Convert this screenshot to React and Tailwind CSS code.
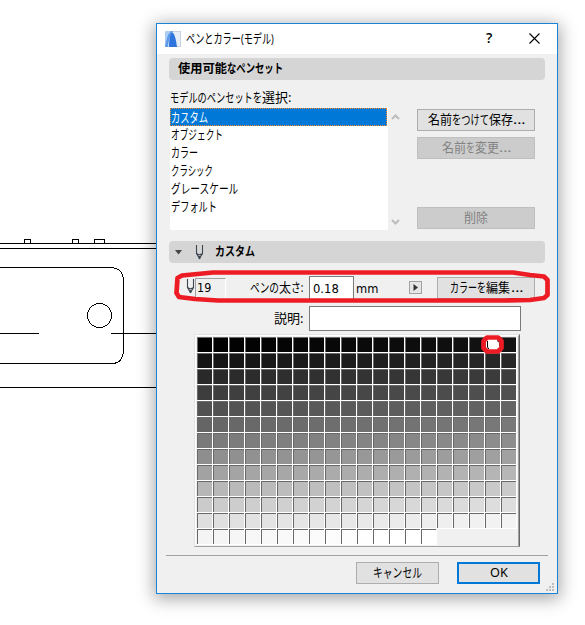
import { useLayoutEffect, useRef, useState } from "react";

const PEN_COUNT = 255;
const SELECTED_PEN = 19;

const penSets = [
  { name: "カスタム", width: 37, selected: true },
  { name: "オブジェクト", width: 52 },
  { name: "カラー", width: 27 },
  { name: "クラシック", width: 42 },
  { name: "グレースケール", width: 67 },
  { name: "デフォルト", width: 46 },
];

function Fit({ width, children }) {
  const ref = useRef(null);
  const [scale, setScale] = useState(1);

  useLayoutEffect(() => {
    setScale(width / ref.current.offsetWidth);
  }, [width, children]);

  return (
    <span className="inline-block whitespace-nowrap" style={{ width }}>
      <span ref={ref} className="inline-block origin-left" style={{ transform: `scaleX(${scale})` }}>
        {children}
      </span>
    </span>
  );
}

function Runs({ runs }) {
  return (
    <span className="inline-flex">
      {runs.map(([text, width]) => (
        <Fit key={text} width={width}>{text}</Fit>
      ))}
    </span>
  );
}

function Button({ className = "", disabled, primary, children }) {
  const look = disabled
    ? "border border-[#bfbfbf] bg-[#cccccc] text-[#838383]"
    : primary
      ? "border-2 border-[#0078d7] bg-[#e1e1e1]"
      : "border border-[#adadad] bg-[#e1e1e1]";
  return (
    <button type="button" disabled={disabled} className={`flex h-[22px] items-center justify-center ${look} ${className}`}>
      {children}
    </button>
  );
}

function PenIcon({ className = "" }) {
  return (
    <svg width="9" height="15" viewBox="0 0 9 15" fill="none" stroke="#3c4650" className={className}>
      <path d="M1.5 0V8.5L4.5 13.5L7.5 8.5V0M1.5 8.5Q4.5 11 7.5 8.5" strokeWidth="1.1" />
      <path d="M4.5 11V14" strokeWidth="1.6" />
    </svg>
  );
}

function Drawing() {
  return (
    <svg width="157" height="625" fill="none" stroke="#000" shapeRendering="crispEdges" className="absolute top-0 left-0">
      <path d="M0 243.5H157M0 248.5H157M0 387.5H157M0 333.5H39M111 333.5H157" />
      <path d="M24.5 243V239.5H30.5V243M72.5 243V239.5H78.5V243M94.5 243V239.5H104.5V243" />
      <path d="M0 267.5H111Q123.500 268.500 123.500 281V351Q122.500 363.500 112 363.500H0" />
      <circle cx="99.5" cy="315.500" r="12" />
    </svg>
  );
}

function TitleBar() {
  return (
    <div className="flex h-[30px] items-center bg-white pl-2">
      <svg width="16" height="16" viewBox="0 0 16 16" className="-mt-px">
        <rect x=".5" y=".5" width="15" height="15" fill="#e6edf7" stroke="#c9d2df" />
        <path d="M0 2V13C1 8 3 2 5 0H2Z" fill="#a9cdf8" />
        <path d="M0 16C1 8 3 2 6 0H8C5 3 4 9 3 16Z" fill="#5d9bea" />
        <path d="M4 16C4 8 5 3 7 1C10 3 11 9 12 16Z" fill="#2f74dc" />
      </svg>
      <span className="ml-[5px] pb-0.5 text-[13px]"><Fit width={88}>ペンとカラー(モデル)</Fit></span>
      <span className="ml-auto w-[9px] pb-0.5 font-['Open_Sans'] text-sm font-semibold">?</span>
      <svg width="11" height="11" viewBox="0 0 11 11" stroke="#000" strokeWidth="1.1" className="-mt-0.5 mr-[17px] ml-[34px]">
        <path d="M.5 .5L10.500 10.500M10.500 .5L.5 10.500" />
      </svg>
    </div>
  );
}

function PenGrid() {
  return (
    <div className="ml-[37px] mt-[3px] h-[213px] w-[326px] border border-t-[#e3e3e3] border-l-[#e3e3e3] border-r-[#696969] border-b-[#a0a0a0]">
      <div className="h-full border-t border-r border-l border-t-white border-l-white border-r-[#a0a0a0] pt-px pl-px">
        <div className="grid w-[320px] grid-cols-[repeat(20,16px)]">
          {Array.from({ length: PEN_COUNT }, (_, i) => {
            const level = Math.min(255, Math.round(i * 1.015));
            const tone = i === SELECTED_PEN - 1 ? 255 : level;
            return (
              <div key={i} className="size-4 border-r border-b border-white">
                <div
                  className="size-[15px] border-t border-l border-[#696969]"
                  style={{ backgroundColor: `rgb(${tone}, ${tone}, ${tone})` }}
                />
              </div>
            );
          })}
        </div>
      </div>
    </div>
  );
}

function Marks() {
  return (
    <svg width="585" height="625" fill="none" strokeLinejoin="round" className="pointer-events-none absolute top-0 left-0">
      <path d="M487.500 341V347L489 349.500M497 340.500L499.500 342.500V346" stroke="#000" />
      <g stroke="#ed1c24" strokeWidth="4.7">
        <path d="M213 272.500H513L530 275L544 276.500L547.500 280V295L544 298L530 300L505 300.500H218L195 299L179 297L176.500 293L177.500 278L182 275.500Z" />
        <path d="M487 337.500H498L501.500 341V348L498 351.500H487L483.500 348V341Z" />
      </g>
    </svg>
  );
}

export default function App() {
  return (
    <div className="relative h-[625px] w-[585px] overflow-hidden bg-white pt-[23px] pl-[156px] font-['Noto_Sans','Noto_Sans_CJK_JP',sans-serif] text-xs leading-[18px] text-black">
      <Drawing />
      <div className="relative h-[571px] w-[402px] border border-[#1883d7] bg-[#f0f0f0] shadow-[0_3px_16px_2px_rgba(0,0,0,0.35)]">
        <TitleBar />

        <div className="mt-1 ml-3 flex h-[22px] w-[376px] items-center rounded bg-[#d5d5d5] pl-[9px] text-[12.5px] font-bold">
          <Runs runs={[["使用可能", 49], ["なペンセット", 56]]} />
        </div>
        <div className="mt-2 ml-[13px] flex h-[20px] items-center pb-0.5 text-[13px]">
          <Runs runs={[["モデルのペンセットを", 92], ["選択:", 29]]} />
        </div>

        <div className="ml-[13px] flex h-[122px]">
          <ul className="w-[218px] bg-white text-[13px]">
            {penSets.map((set) => (
              <li
                key={set.name}
                className={set.selected ? "flex h-[18px] w-[217px] items-center border border-dotted border-[#ff8728] bg-[#0078d7] pb-px text-white" : "flex h-[18px] items-center pb-0.5 pl-px"}
              >
                <Fit width={set.width}>{set.name}</Fit>
              </li>
            ))}
          </ul>
          <div className="flex w-[29px] flex-col justify-between pt-[6px] pb-[5px] pl-[3px]">
            <svg width="9" height="6" fill="none" stroke="#bcbcbc" strokeWidth="2"><path d="M1 5L4.500 1.500L8 5" /></svg>
            <svg width="9" height="6" fill="none" stroke="#bcbcbc" strokeWidth="2"><path d="M1 1L4.500 4.500L8 1" /></svg>
          </div>
          <div className="flex flex-col pt-px text-[13px]">
            <Button className="w-[118px] pb-0.5">
              <Runs runs={[["名前", 24], ["をつけて", 37], ["保存", 24], ["...", 12]]} />
            </Button>
            <Button className="mt-1.5 w-[118px] pb-0.5" disabled>
              <Runs runs={[["名前", 24], ["を", 9], ["変更", 24], ["...", 12]]} />
            </Button>
            <Button className="mt-12 w-[118px] pb-0.5" disabled>
              <Fit width={24}>削除</Fit>
            </Button>
          </div>
        </div>

        <div className="mt-[11px] ml-3 flex h-[22px] w-[376px] items-center rounded bg-[#d5d5d5] pl-1.5 text-[12.5px] font-bold">
          <svg width="8" height="5" fill="#464646"><path d="M0 0H7L3.500 4.500Z" /></svg>
          <PenIcon className="ml-3" />
          <span className="ml-[11px]"><Fit width={40}>カスタム</Fit></span>
        </div>

        <div className="mt-3 ml-[29px] flex h-[25px] items-start">
          <PenIcon className="mt-1" />
          <div className="mt-[3px] h-5 w-[31px] border-t border-r border-l border-[#a0a0a0] border-r-white pl-px font-['DejaVu_Sans']">
            <Fit width={14}>19</Fit>
          </div>
          <div className="mt-[3px] ml-6 w-[59px] text-[13px]">
            <Runs runs={[["ペンの", 29], ["太", 12], ["さ:", 12]]} />
          </div>
          <div className="mt-px h-6 w-[45px] border border-[#7a7a7a] bg-white pt-[3px] pl-[3px] font-['DejaVu_Sans']">
            <Fit width={26}>0.18</Fit>
          </div>
          <span className="mt-[5px] ml-0.5 font-['DejaVu_Sans']"><Fit width={22}>mm</Fit></span>
          <div className="mt-1.5 ml-[31px] flex size-[13px] items-center justify-center border border-[#a0a0a0] bg-[#e6e6e6]">
            <svg width="5" height="7" fill="#333"><path d="M.5 0L5 3.500L.5 7Z" /></svg>
          </div>
          <Button className="mt-0.5 ml-[15px] w-[98px] pb-0.5 text-[13px]">
            <Runs runs={[["カラーを", 36], ["編集", 24], ["...", 12]]} />
          </Button>
        </div>

        <div className="mt-[6px] ml-[117px] flex h-[25px] items-center text-[13px]">
          <span className="pb-0.5"><Fit width={29}>説明:</Fit></span>
          <div className="ml-[6px] h-[25px] w-[212px] border border-[#7a7a7a] bg-white" />
        </div>

        <PenGrid />

        <div className="mt-2 mr-[9px] ml-[9px] h-px bg-[#a0a0a0]" />
        <div className="mt-1.5 ml-[199px] flex gap-[18px]">
          <Button className="w-[83px] pb-0.5 text-[13px]"><Fit width={49}>キャンセル</Fit></Button>
          <Button className="w-[83px]" primary><Fit width={18}>OK</Fit></Button>
        </div>
        <svg width="8" height="8" fill="#bfbfbf" className="absolute right-[3px] bottom-[2px]">
          <path d="M6 0h2v2h-2zM3 3h2v2h-2zM6 3h2v2h-2zM0 6h2v2h-2zM3 6h2v2h-2zM6 6h2v2h-2z" />
        </svg>
      </div>
      <Marks />
    </div>
  );
}
